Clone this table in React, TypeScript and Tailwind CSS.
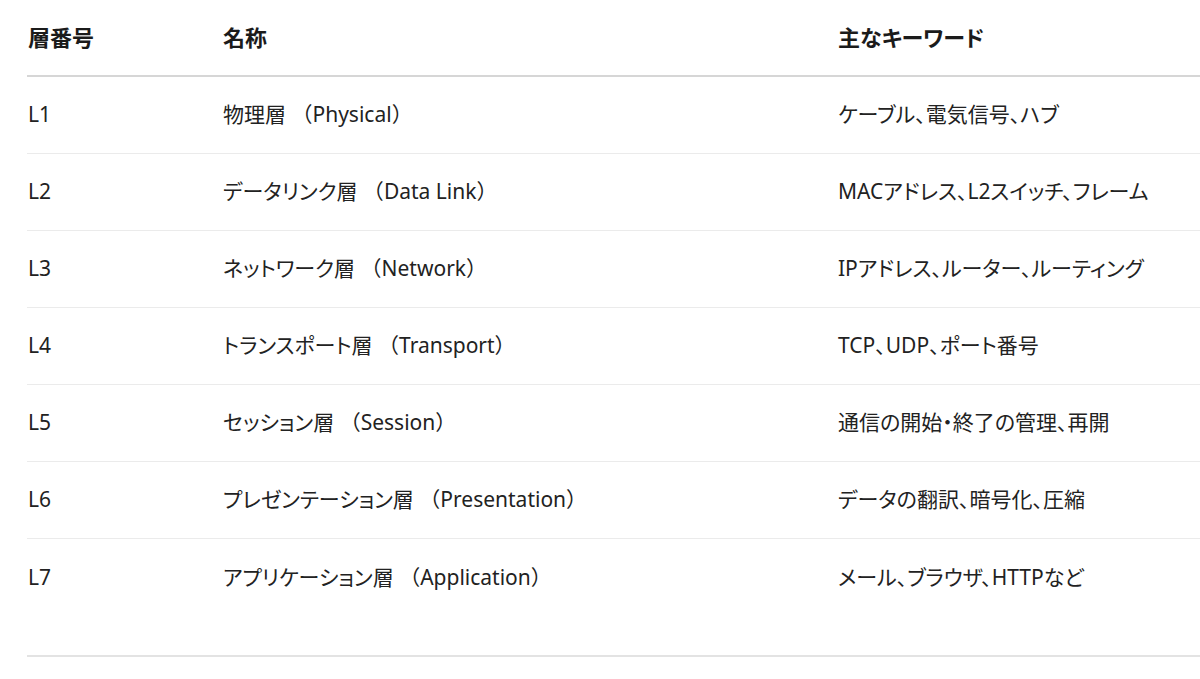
import React from 'react';

const rows = [
    { id: 'L1', jp: '物理層', en: 'Physical', keywords: 'ケーブル、電気信号、ハブ' },
    { id: 'L2', jp: 'データリンク層', en: 'Data Link', keywords: 'MACアドレス、L2スイッチ、フレーム' },
    { id: 'L3', jp: 'ネットワーク層', en: 'Network', keywords: 'IPアドレス、ルーター、ルーティング' },
    { id: 'L4', jp: 'トランスポート層', en: 'Transport', keywords: 'TCP、UDP、ポート番号' },
    { id: 'L5', jp: 'セッション層', en: 'Session', keywords: '通信の開始・終了の管理、再開' },
    { id: 'L6', jp: 'プレゼンテーション層', en: 'Presentation', keywords: 'データの翻訳、暗号化、圧縮' },
    { id: 'L7', jp: 'アプリケーション層', en: 'Application', keywords: 'メール、ブラウザ、HTTPなど' },
];

const font = "font-['Noto_Sans','Noto_Sans_CJK_JP',sans-serif]";
const palt = "[font-feature-settings:'palt']";

export default function App(): JSX.Element {
    return (
        <div className={`w-[1200px] h-[679px] overflow-hidden bg-white pl-[27px] ${font}`}>
            <div className="w-[1300px]">
                {/* header */}
                <div className={`grid grid-cols-[196px_615px_1fr] h-[77px] items-center border-b-2 border-[#d6d6d6] text-[22px] font-bold text-[#1b1b1b] ${palt}`}>
                    <div className="pl-[1px]">層番号</div>
                    <div>名称</div>
                    <div>主なキーワード</div>
                </div>

                {rows.map((row, i) => (
                    <div
                        key={row.id}
                        className={`grid grid-cols-[196px_615px_1fr] h-[77px] items-center text-[21px] text-[#222] ${
                            i < rows.length - 1 ? 'border-b border-[#ebebeb]' : ''
                        }`}
                    >
                        <div className="pl-[1px]">{row.id}</div>
                        <div>
                            <span className={palt}>{row.jp}</span> （{row.en}）
                        </div>
                        <div className={palt}>{row.keywords}</div>
                    </div>
                ))}

                <div className="h-[41px] border-b-2 border-[#e3e3e3]" />
            </div>
        </div>
    );
}
